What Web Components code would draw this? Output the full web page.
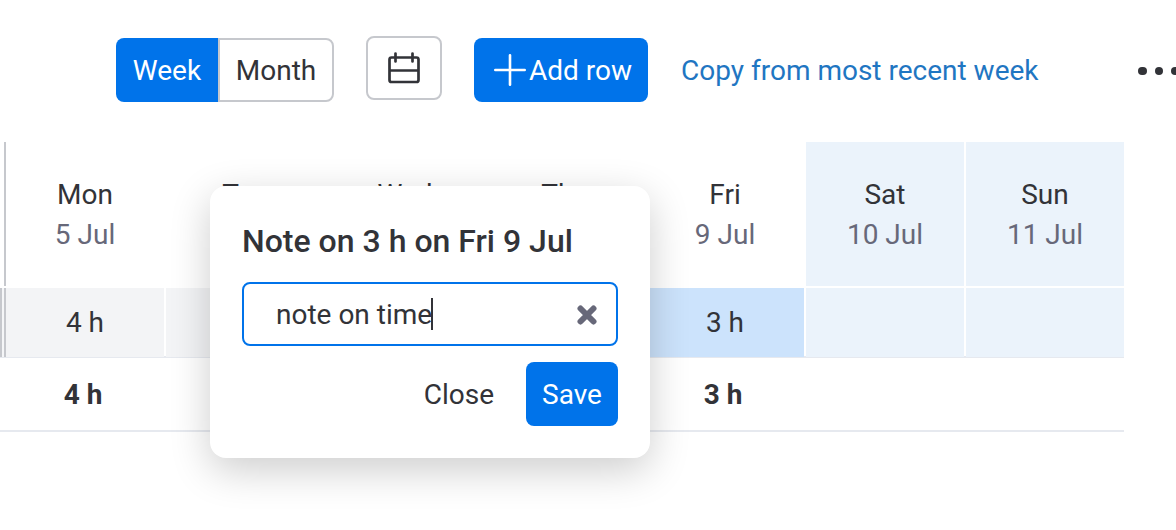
<!DOCTYPE html>
<html><head><meta charset="utf-8">
<style>
html,body{margin:0;padding:0;background:#fff;overflow:hidden}
body{width:1176px;height:530px;font-family:Roboto,"Liberation Sans",sans-serif;color:#323338;position:relative}
</style></head><body>
<time-toolbar></time-toolbar>
<time-grid></time-grid>
<note-popup></note-popup>
<script>
function def(name,html){customElements.define(name,class extends HTMLElement{constructor(){super();this.attachShadow({mode:'open'}).innerHTML=html;}});}
def('time-toolbar',`<style>
:host{display:flex;align-items:center;height:64px;padding:38px 0 0 116px;font-size:28px;overflow:hidden;width:1176px;box-sizing:content-box;max-width:1060px}
:host>*{flex:none}
.seg{display:flex;height:64px;box-sizing:border-box;flex:none}
.w{width:102px;background:#0073ea;color:#fff;border-radius:8px 0 0 8px;display:flex;align-items:center;justify-content:center}
.m{width:116px;box-sizing:border-box;border:2px solid #c6c8cd;border-radius:0 8px 8px 0;display:flex;align-items:center;justify-content:center}
.cal{flex:none;width:76px;height:64px;box-sizing:border-box;border:2px solid #c6c8cd;border-radius:8px;margin:-4px 0 0 32px;display:flex;align-items:center;justify-content:center}
.add{flex:none;width:174px;height:64px;background:#0073ea;color:#fff;border-radius:8px;margin-left:32px;display:flex;align-items:center;padding-left:20px;box-sizing:border-box;white-space:nowrap}
.add svg{margin-right:3px;flex:none}
a{color:#1f76c2;margin-left:33px;white-space:nowrap;width:457px;flex:none}
.dots{display:flex;gap:8px;flex:none;margin-top:2px}
.dots i{width:8.500px;height:8.500px;border-radius:50%;background:#323338;flex:none}
</style>
<div class="seg"><div class="w">Week</div><div class="m">Month</div></div>
<div class="cal"><svg width="32" height="32" viewBox="0 0 32 32" fill="none" stroke="#323338" stroke-width="2.700" stroke-linejoin="round" stroke-linecap="round"><path d="M7.500 5.500H3.500a2 2 0 0 0-2 2V28a2 2 0 0 0 2 2h25a2 2 0 0 0 2-2V7.500a2 2 0 0 0-2-2h-4M7.500 1.500v8M24.500 1.500v8M7.500 5.500h17M1.500 18.500h29"/></svg></div>
<div class="add"><svg width="32" height="32" viewBox="0 0 32 32" stroke="#fff" stroke-width="2.600" stroke-linecap="round"><path d="M16 1.300v29.400M1.300 16h29.400"/></svg>Add row</div>
<a>Copy from most recent week</a>
<div class="dots"><i></i><i></i><i></i></div>`);

def('day-head',`<style>
:host{display:flex;flex-direction:column;align-items:center;padding-top:33px;box-sizing:border-box;height:144px;font-size:28px;line-height:40px;background:var(--bg,transparent)}
.d{color:#676879}
</style><div><slot name="day"></slot></div><div class="d"><slot name="date"></slot></div>`);

def('hour-cell',`<style>
:host{display:flex;align-items:center;justify-content:center;height:69px;font-size:28px;background:var(--bg,transparent);box-sizing:border-box}
</style><slot></slot>`);

def('time-grid',`<style>
:host{display:block;width:1124px;margin-top:40px}
.head,.r1,.r2{display:grid;grid-template-columns:6px repeat(6,160px) 158px;width:1124px}
.head{height:146px}
.r1{height:70px;box-shadow:inset 0 -2px 0 #e6e9ef}
.r2{height:74px;box-shadow:inset 0 -2px 0 #e6e9ef}
day-head,hour-cell{width:158px}
.r1 hour-cell{--bg:#f3f4f6}
.r1 hour-cell.sel{--bg:#cce3fc}
.r1 hour-cell.we,day-head.we{--bg:#ebf3fb}
.r2 hour-cell{height:72px;font-weight:700;--bg:transparent;padding-right:4px}
.ln{box-sizing:border-box;border-right:2px solid #c6c8cd;height:144px}
.st{background:#f5f6f8;border-left:2px solid #c6c8cd;border-right:2px solid #c6c8cd;box-sizing:border-box;height:69px}
</style>
<div class="head"><div class="ln"></div>
<day-head><span slot="day">Mon</span><span slot="date">5 Jul</span></day-head>
<day-head><span slot="day">Tue</span><span slot="date">6 Jul</span></day-head>
<day-head><span slot="day">Wed</span><span slot="date">7 Jul</span></day-head>
<day-head><span slot="day">Thu</span><span slot="date">8 Jul</span></day-head>
<day-head><span slot="day">Fri</span><span slot="date">9 Jul</span></day-head>
<day-head class="we"><span slot="day">Sat</span><span slot="date">10 Jul</span></day-head>
<day-head class="we"><span slot="day">Sun</span><span slot="date">11 Jul</span></day-head>
</div>
<div class="r1"><div class="st"></div>
<hour-cell>4 h</hour-cell><hour-cell></hour-cell><hour-cell></hour-cell><hour-cell></hour-cell><hour-cell class="sel">3 h</hour-cell><hour-cell class="we"></hour-cell><hour-cell class="we"></hour-cell></div>
<div class="r2"><div></div>
<hour-cell>4 h</hour-cell><hour-cell></hour-cell><hour-cell></hour-cell><hour-cell></hour-cell><hour-cell>3 h</hour-cell><hour-cell></hour-cell><hour-cell></hour-cell></div>`);

def('note-popup',`<style>
:host{position:absolute;left:210px;top:186px;width:440px;height:272px;box-sizing:border-box;padding:33px 32px 0 32px;background:#fff;border-radius:16px;box-shadow:0 12px 40px rgba(0,0,0,.2);display:flex;flex-direction:column}
h2{margin:0;font-size:32px;font-weight:500;line-height:44px;height:63px;white-space:nowrap}
.in{height:64px;box-sizing:border-box;border:2px solid #0073ea;border-radius:8px;display:flex;align-items:center;padding-left:32px;padding-right:19px;font-size:28px}
.t{flex:1;white-space:nowrap;display:flex;align-items:center}
.c{display:inline-block;width:2px;height:32px;background:#323338;margin-left:-1px}
svg{margin-top:2px}
.acts{display:flex;justify-content:flex-end;align-items:center;margin-top:16px;font-size:28px}
.close{margin-right:32px}
.save{width:92px;height:64px;background:#0073ea;color:#fff;border-radius:8px;display:flex;align-items:center;justify-content:center}
</style>
<h2>Note on 3 h on Fri 9 Jul</h2>
<div class="in"><span class="t">note on time<span class="c"></span></span>
<svg width="20" height="20" viewBox="0 0 20 20" stroke="#676879" stroke-width="6" stroke-linecap="round"><path d="M3.500 3.500l13 13M16.500 3.500l-13 13"/></svg></div>
<div class="acts"><span class="close">Close</span><span class="save">Save</span></div>`);
</script>
</body></html>
